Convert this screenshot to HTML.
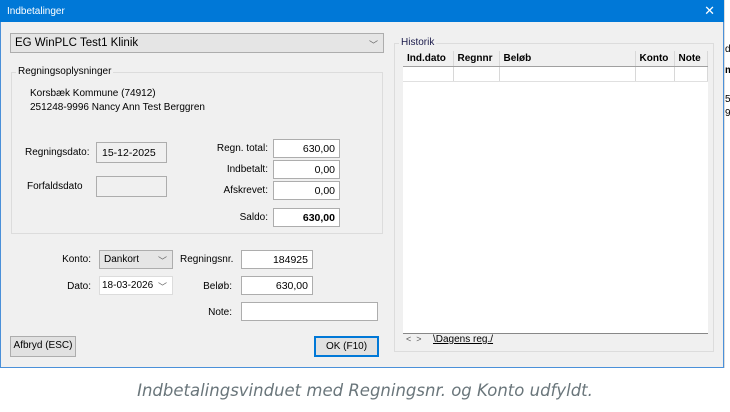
<!DOCTYPE html>
<html><head><meta charset="utf-8"><style>
*{box-sizing:border-box;margin:0;padding:0}
body{width:730px;height:412px;background:#fff;position:relative;overflow:hidden;font-family:"Liberation Sans",sans-serif;font-size:10px;color:#000}
.a{position:absolute;white-space:nowrap}
.win{left:0;top:0;width:724px;height:368px;background:#f0f0f0;border:1px solid #4a90d9;border-top:none}
.title{left:0;top:0;width:724px;height:22px;background:#0078d7;color:#fff;font-size:10px;padding:6px 0 0 7px}
.box{position:absolute;border:1px solid #adadad;background:#fff;text-align:right;padding:2px 4px 0 0;font-size:10.5px;line-height:14px}
.grp{position:absolute;border:1px solid #dcdcdc}
.lbl{position:absolute;background:#f0f0f0;padding:0 2px}
.r{text-align:right}
.btn{position:absolute;border:1px solid #adadad;background:#e1e1e1;text-align:center;line-height:18px;white-space:nowrap}
.combo{position:absolute;border:1px solid #adadad;background:#e5e5e5;padding:2px 4px;line-height:14px;white-space:nowrap}
.chev{position:absolute;right:5px;top:3px;color:#666;font-size:9px}
th,td{border-right:1px solid #d8d8d8;font-size:10px;text-align:left;padding:0 4px;height:15px}
th{background:#f0f0f0;font-weight:bold;border-bottom:1px solid #a0a0a0}
</style></head><body>
<div class="a win"></div>
<div class="a title">Indbetalinger<span style="position:absolute;right:9px;top:3px;font-size:13px">✕</span></div>

<div class="combo" style="left:10px;top:33px;width:374px;height:20px;font-size:11.5px;padding-top:2px">EG WinPLC Test1 Klinik<span class="chev" style="top:4px">﹀</span></div>

<div class="grp" style="left:11px;top:72px;width:372px;height:162px"></div>
<div class="lbl" style="left:16px;top:66px">Regningsoplysninger</div>
<div class="a" style="left:30px;top:87px;line-height:14px">Korsbæk Kommune (74912)<br>251248-9996 Nancy Ann Test Berggren</div>
<div class="a" style="left:25px;top:147px">Regningsdato:</div>
<div class="box" style="left:96px;top:142px;width:71px;height:21px;background:#f0f0f0;text-align:left;padding:3px 5px">15-12-2025</div>
<div class="a" style="left:27px;top:181px">Forfaldsdato</div>
<div class="box" style="left:96px;top:176px;width:71px;height:21px;background:#f0f0f0"></div>
<div class="a r" style="left:180px;width:88px;top:143px">Regn. total:</div>
<div class="a r" style="left:180px;width:88px;top:164px">Indbetalt:</div>
<div class="a r" style="left:180px;width:88px;top:185px">Afskrevet:</div>
<div class="a r" style="left:180px;width:88px;top:212px">Saldo:</div>
<div class="box" style="left:273px;top:139px;width:67px;height:19px">630,00</div>
<div class="box" style="left:273px;top:160px;width:67px;height:19px">0,00</div>
<div class="box" style="left:273px;top:181px;width:67px;height:19px">0,00</div>
<div class="box" style="left:273px;top:208px;width:67px;height:19px;font-weight:bold">630,00</div>

<div class="a r" style="left:40px;width:51px;top:254px">Konto:</div>
<div class="combo" style="left:99px;top:250px;width:74px;height:19px">Dankort<span class="chev">﹀</span></div>
<div class="a r" style="left:40px;width:51px;top:281px">Dato:</div>
<div class="combo" style="left:99px;top:276px;width:74px;height:19px;background:#fff;border-color:#dcdcdc;padding-left:2px">18-03-2026<span class="chev">﹀</span></div>
<div class="a" style="left:180px;top:254px">Regningsnr.</div>
<div class="a r" style="left:180px;width:52px;top:281px">Beløb:</div>
<div class="a r" style="left:180px;width:52px;top:307px">Note:</div>
<div class="box" style="left:241px;top:250px;width:72px;height:19px">184925</div>
<div class="box" style="left:241px;top:276px;width:72px;height:19px">630,00</div>
<div class="box" style="left:241px;top:302px;width:137px;height:19px"></div>
<div class="btn" style="left:10px;top:336px;width:66px;height:21px">Afbryd (ESC)</div>
<div class="btn" style="left:314px;top:336px;width:65px;height:21px;border:2px solid #0078d7;line-height:17px">OK (F10)</div>

<div class="grp" style="left:394px;top:43px;width:320px;height:309px"></div>
<div class="lbl" style="left:399px;top:37px;color:#1a1a4a">Historik</div>
<div class="a" style="left:403px;top:51px;width:305px;height:282px;background:#fff">
<table style="border-collapse:collapse;width:305px"><tr><th style="width:50px">Ind.dato</th><th style="width:46px">Regnnr</th><th style="width:136px">Beløb</th><th style="width:39px">Konto</th><th>Note</th></tr>
<tr><td style="border-bottom:1px solid #e0e0e0"></td><td style="border-bottom:1px solid #e0e0e0"></td><td style="border-bottom:1px solid #e0e0e0"></td><td style="border-bottom:1px solid #e0e0e0"></td><td style="border-bottom:1px solid #e0e0e0"></td></tr></table></div>
<div class="a" style="left:403px;top:333px;width:305px;border-top:1px solid #888"></div>
<div class="a" style="left:406px;top:334px;font-size:9px;color:#555">&lt;&nbsp; &gt;</div>
<div class="a" style="left:433px;top:334px;text-decoration:underline">\Dagens reg./</div>

<div class="a" style="left:724px;top:0;width:6px;height:368px;background:#fff;border-left:1px solid #ddd"></div>
<div class="a" style="left:725px;top:44px;font-size:10px">d</div>
<div class="a" style="left:725px;top:65px;font-size:10px;font-weight:bold">m</div>
<div class="a" style="left:725px;top:94px;font-size:10px">5</div>
<div class="a" style="left:725px;top:108px;font-size:10px">9</div>

<div class="a" style="left:0;top:381px;width:730px;text-align:center;font-family:'DejaVu Sans',sans-serif;font-style:italic;font-size:16.5px;color:#6a767b">Indbetalingsvinduet med Regningsnr. og Konto udfyldt.</div>
</body></html>
